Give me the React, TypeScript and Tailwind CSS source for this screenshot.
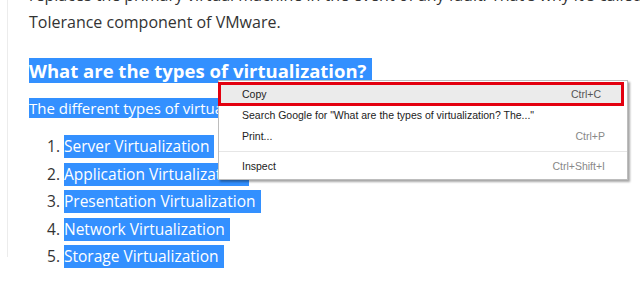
export default function App() {
  const items = [
    "Server Virtualization",
    "Application Virtualization",
    "Presentation Virtualization",
    "Network Virtualization",
    "Storage Virtualization",
  ];

  return (
    <div className="relative w-[640px] h-[288px] overflow-hidden bg-white" style={{ fontFamily: '"Open Sans", sans-serif' }}>
      {/* article column */}
      <div className="ml-[7px] h-[275px] border-l border-[#ececec] pl-[21px] text-[#333]">
        <p className="mt-[-18px] text-[16px] leading-[27px] whitespace-nowrap">
          replaces the primary virtual machine in the event of any fault. That's why it's called Fault
          <br />
          Tolerance component of VMware.
        </p>

        <h2 className="mt-[22px] text-[18.5px] font-bold leading-[25px]">
          <span className="bg-[#3390ff] text-white pr-[6px]">What are the types of virtualization?</span>
        </h2>

        <p className="mt-[15px] text-[15px] leading-[20px]">
          <span className="bg-[#3390ff] text-white">The different types of virtualization are as follows:</span>
        </p>

        <ol className="mt-[15px] pl-[18px] text-[15.5px]">
          {items.map((item, i) => (
            <li key={item} className="flex h-[27.5px] items-center">
              <span className="w-[17px] text-[#333]">{i + 1}.</span>
              <span className="bg-[#3390ff] text-white pr-[5px]">{item}</span>
            </li>
          ))}
        </ol>
      </div>

      {/* context menu */}
      <div
        className="absolute left-[218px] top-[80px] w-[410px] border border-[#bdbdbd] bg-white pt-[3px] pb-[2px] text-[10.5px] text-[#222] shadow-[2px_2px_2px_rgba(0,0,0,0.35)]"
        style={{ fontFamily: '"Liberation Sans", sans-serif' }}
      >
        <div className="absolute left-[-1px] top-[1px] h-[24px] w-[406px] border-[3px] border-[#e3000f]" />
        <div className="flex h-[21px] items-center justify-between bg-[#ebebeb] pl-[23px] pr-[22px] mr-[4px]">
          <span>Copy</span>
          <span className="text-[#555]">Ctrl+C</span>
        </div>
        <div className="flex h-[21px] items-center justify-between pl-[23px] pr-[22px]">
          <span>Search Google for "What are the types of virtualization? The..."</span>
        </div>
        <div className="flex h-[21px] items-center justify-between pl-[23px] pr-[22px]">
          <span>Print...</span>
          <span className="text-[#888]">Ctrl+P</span>
        </div>
        <div className="my-[4px] h-px bg-[#e6e6e6]" />
        <div className="flex h-[21px] items-center justify-between pl-[23px] pr-[22px]">
          <span>Inspect</span>
          <span className="text-[#888]">Ctrl+Shift+I</span>
        </div>
      </div>
    </div>
  );
}
